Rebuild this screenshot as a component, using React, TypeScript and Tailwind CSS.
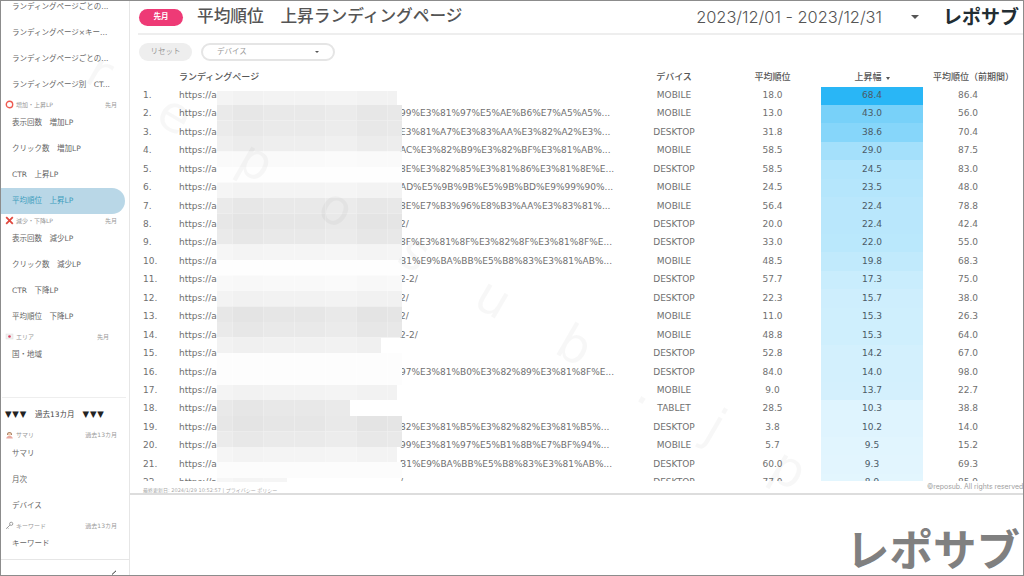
const rows = [
  ['MOBILE', '18.0', 68.4, '86.4', ''],
  ['MOBILE', '13.0', 43.0, '56.0', '99%E3%81%97%E5%AE%B6%E7%A5%A5%...'],
  ['DESKTOP', '31.8', 38.6, '70.4', 'E3%81%A7%E3%83%AA%E3%82%A2%E3%...'],
  ['MOBILE', '58.5', 29.0, '87.5', 'AC%E3%82%B9%E3%82%BF%E3%81%AB%...'],
  ['DESKTOP', '58.5', 24.5, '83.0', '8E%E3%82%85%E3%81%86%E3%81%8E%E...'],
  ['MOBILE', '24.5', 23.5, '48.0', 'AD%E5%9B%9B%E5%9B%BD%E9%99%90%...'],
  ['MOBILE', '56.4', 22.4, '78.8', '8E%E7%B3%96%E8%B3%AA%E3%83%81%...'],
  ['DESKTOP', '20.0', 22.4, '42.4', '2/'],
  ['DESKTOP', '33.0', 22.0, '55.0', '8F%E3%81%8F%E3%82%8F%E3%81%8F%E...'],
  ['MOBILE', '48.5', 19.8, '68.3', 'B1%E9%BA%BB%E5%B8%83%E3%81%AB%...'],
  ['DESKTOP', '57.7', 17.3, '75.0', '2-2/'],
  ['DESKTOP', '22.3', 15.7, '38.0', '2/'],
  ['MOBILE', '11.0', 15.3, '26.3', '2/'],
  ['MOBILE', '48.8', 15.3, '64.0', '2-2/'],
  ['DESKTOP', '52.8', 14.2, '67.0', ''],
  ['DESKTOP', '84.0', 14.0, '98.0', '97%E3%81%B0%E3%82%89%E3%81%8F%E...'],
  ['MOBILE', '9.0', 13.7, '22.7', ''],
  ['TABLET', '28.5', 10.3, '38.8', ''],
  ['DESKTOP', '3.8', 10.2, '14.0', '82%E3%81%B5%E3%82%82%E3%81%B5%...'],
  ['MOBILE', '5.7', 9.5, '15.2', '99%E3%81%97%E5%B1%8B%E7%BF%94%...'],
  ['DESKTOP', '60.0', 9.3, '69.3', 'B1%E9%BA%BB%E5%B8%83%E3%81%AB%...'],
  ['DESKTOP', '77.0', 8.9, '85.9', '/'],
] as [string, string, number, string, string][];

// mosaic bands: top y, height, gray level, right edge
const bands = [
  [91, 14, 243, 397], [105, 15.5, 233, 402], [120.5, 15.5, 234, 402], [136, 15.5, 238, 402],
  [151.5, 15.5, 250, 402], [167, 15.5, 254, 402], [182.5, 15.5, 244, 402], [198, 15.5, 233, 402],
  [213.5, 15.5, 230, 402], [229, 15.5, 233, 402], [244.5, 15.5, 245, 402], [260, 15.5, 254, 402],
  [275.5, 15.5, 249, 402], [291, 15.5, 242, 402], [306.5, 15.5, 230, 402], [322, 15.5, 233, 402],
  [337.5, 15.5, 241, 381], [353, 16, 253, 402], [369, 16, 253, 402], [385, 15, 243, 397],
  [400, 16, 232, 350], [416, 15.5, 230, 402], [431.5, 15.5, 234, 402], [447, 15, 244, 397],
  [462, 16, 252, 402], [478, 4, 245, 287],
];
const colShift = [1, -2, -2, 0, 0, 0, 0, 2, 2, -2, -2, -1];

const mosaic = bands.flatMap(([y, h, gray, end]) =>
  colShift.map((shift, i) => {
    const x = 217 + i * 15.5;
    const level = Math.min(255, Math.round(gray + (shift * (255 - gray)) / 20));
    return { x, y, h, w: Math.max(0, Math.min(15.5, end - x)), level };
  })
);

const CircleIcon = () => (
  <svg width="9" height="9" viewBox="0 0 9 9" className="shrink-0">
    <circle cx="4.5" cy="4.5" r="3.2" fill="none" stroke="#ee5a50" strokeWidth="1.4" />
  </svg>
);
const CrossIcon = () => (
  <svg width="9" height="9" viewBox="0 0 9 9" className="shrink-0">
    <path d="M1.2 1.2 7.8 7.8M7.8 1.2 1.2 7.8" stroke="#e0483e" strokeWidth="1.8" />
  </svg>
);
const FlagIcon = () => (
  <svg width="9" height="9" viewBox="0 0 9 9" className="shrink-0">
    <rect x="1" y="2" width="7" height="5" fill="#f1f1f1" stroke="#ddd" strokeWidth=".5" />
    <circle cx="4.5" cy="4.5" r="1.3" fill="#d8415f" />
  </svg>
);
const PersonIcon = () => (
  <svg width="9" height="9" viewBox="0 0 9 9" className="shrink-0">
    <path d="M2 4.4a2.5 2.5 0 1 1 5 0v.6H2z" fill="#a98263" />
    <circle cx="4.5" cy="4.3" r="1.5" fill="#f3cdb2" />
    <path d="M1.2 8.6c.3-2 1.7-2.6 3.3-2.6s3 .6 3.3 2.6z" fill="#e9a9a0" />
  </svg>
);
const KeyIcon = () => (
  <svg width="9" height="9" viewBox="0 0 9 9" className="shrink-0">
    <circle cx="6.2" cy="2.8" r="1.6" fill="none" stroke="#888" strokeWidth=".8" />
    <path d="M5 4 1.2 7.8M2.4 6.6l1 1" fill="none" stroke="#888" strokeWidth=".8" />
  </svg>
);

const SideItem = ({ label, active }: { label: string; active?: boolean }) => (
  <div
    className={
      active
        ? 'flex h-[26px] w-[124px] shrink-0 items-center rounded-r-[13px] bg-[#b9d7e7] pl-[11px] text-[#3f9dbd]'
        : 'flex h-[26px] shrink-0 items-center pl-[11px]'
    }
  >
    <span className="whitespace-pre">{label}</span>
  </div>
);

const SideSection = ({ icon, label, period, narrow }: { icon: React.ReactNode; label: string; period: string; narrow?: boolean }) => (
  <div className={narrow ? 'flex h-3 shrink-0 items-center pl-1 pr-[20px] text-[6px] text-[#999]' : 'flex h-3 shrink-0 items-center pl-1 pr-3 text-[6px] text-[#999]'}>
    {icon}
    <span className="ml-[2px] whitespace-pre">{label}</span>
    <span className="ml-auto">{period}</span>
  </div>
);

const Caret = ({ className }: { className: string }) => (
  <span className={`inline-block h-0 w-0 border-x-transparent border-t-[#555] ${className}`} />
);

const Sidebar = () => (
  <aside className="relative flex h-full w-[129px] shrink-0 flex-col overflow-hidden border-r border-[#e6e6e6] text-[7.5px] text-[#666]">
    <div className="-mt-[7px] flex flex-col">
      <SideItem label="ランディングページごとの..." />
      <SideItem label="ランディングページ×キー..." />
      <SideItem label="ランディングページごとの..." />
      <SideItem label="ランディングページ別　CT..." />
      <SideSection icon={<CircleIcon />} label="増加・上昇LP" period="先月" />
      <SideItem label="表示回数　増加LP" />
      <SideItem label="クリック数　増加LP" />
      <SideItem label="CTR　上昇LP" />
      <SideItem label="平均順位　上昇LP" active />
      <SideSection icon={<CrossIcon />} label="減少・下降LP" period="先月" />
      <SideItem label="表示回数　減少LP" />
      <SideItem label="クリック数　減少LP" />
      <SideItem label="CTR　下降LP" />
      <SideItem label="平均順位　下降LP" />
      <SideSection icon={<FlagIcon />} label="エリア" period="先月" narrow />
      <SideItem label="国・地域" />
      <div className="mx-px mt-[29px] w-[124px] border-t border-[#eeeeee]" />
      <div className="flex h-[30px] items-center pl-[4px] pt-[3px] text-[7.5px] text-[#444]">
        <span className="text-[8.5px] tracking-[0.8px] text-[#222]">▼▼▼</span>
        <span className="ml-[8px]">過去13カ月</span>
        <span className="ml-[8px] text-[8.5px] tracking-[0.8px] text-[#222]">▼▼▼</span>
      </div>
      <SideSection icon={<PersonIcon />} label="サマリ" period="過去13カ月" />
      <div className="h-px shrink-0" />
      <SideItem label="サマリ" />
      <SideItem label="月次" />
      <SideItem label="デバイス" />
      <SideSection icon={<KeyIcon />} label="キーワード" period="過去13カ月" />
      <SideItem label="キーワード" />
      <div className="mt-[2px] border-t border-[#e6e6e6]" />
    </div>
    <svg className="absolute bottom-0 left-[110px]" width="8" height="5" viewBox="0 0 8 5">
      <path d="M1 4.5 5 .8" stroke="#333" strokeWidth="1" fill="none" />
    </svg>
  </aside>
);

const Header = () => (
  <header className="ml-2 flex h-[34px] shrink-0 items-center border-b-2 border-[#eeeeee]">
    <span className="ml-px flex h-[17px] w-[44px] items-center justify-center rounded-full bg-[#ee3a76] text-[7.5px] font-bold text-white">先月</span>
    <h1 className="ml-[14px] whitespace-pre text-[16.7px] font-medium text-[#555]">平均順位　上昇ランディングページ</h1>
    <span className="ml-auto font-['Inter',sans-serif] text-[16.4px] font-light text-[#555]">2023/12/01 - 2023/12/31</span>
    <Caret className="ml-[29px] border-x-[4px] border-t-[4px]" />
    <span className="ml-[24px] mr-[4px] text-[19px] font-bold leading-none text-[#222d33]">レポサブ</span>
  </header>
);

const Filters = () => (
  <div className="ml-[9px] mt-2 flex h-[18px] shrink-0 items-stretch gap-[9px] text-[7.5px] text-[#999]">
    <button className="w-[53px] rounded-full bg-[#eeeeee]">リセット</button>
    <div className="flex w-[134px] items-center rounded-full border-2 border-[#e5e5e5] pl-[14px] pr-[14px]">
      <span>デバイス</span>
      <Caret className="ml-auto border-x-[2px] border-t-[2px]" />
    </div>
  </div>
);

const gridCols = 'grid grid-cols-[36px_445px_100px_97px_102px_90px] pl-[13px]';

const Table = () => (
  <div className="mt-[8.5px] h-[411.5px] shrink-0 overflow-hidden text-[9px] text-[#707070]">
    <div className={`${gridCols} h-[17px] items-center font-medium text-[#555]`}>
      <span />
      <span>ランディングページ</span>
      <span className="text-center">デバイス</span>
      <span className="text-center">平均順位</span>
      <span className="flex items-center justify-center gap-1">
        上昇幅
        <Caret className="border-x-[2.5px] border-t-[3px]" />
      </span>
      <span className="ml-[10px] whitespace-nowrap">平均順位（前期間）</span>
    </div>
    {rows.map(([device, avg, lift, prev, tail], i) => {
      const t = lift / 68.4;
      const bg = `rgb(${Math.round(255 - 214 * t)},${Math.round(255 - 73 * t)},${Math.round(255 - 9 * t)})`;
      return (
        <div key={i} className={`${gridCols} h-[18.45px] items-center`}>
          <span>{i + 1}.</span>
          <span className="flex whitespace-nowrap">
            <span className="w-[221px]">https://a</span>
            <span>{tail}</span>
          </span>
          <span className="text-center">{device}</span>
          <span className="text-center">{avg}</span>
          <span className="flex h-full items-center justify-center text-[#4b5a66]" style={{ backgroundColor: bg }}>
            {lift.toFixed(1)}
          </span>
          <span className="text-center">{prev}</span>
        </div>
      );
    })}
  </div>
);

export default function App() {
  return (
    <div className="relative flex h-[576px] w-[1024px] overflow-hidden border border-[#8c8c8c] bg-white font-['DejaVu_Sans','Noto_Sans_CJK_JP',sans-serif]">
      <Sidebar />
      <main className="flex min-w-0 flex-1 flex-col">
        <Header />
        <Filters />
        <Table />
        <div className="flex h-[12px] shrink-0 justify-between whitespace-nowrap pl-[13px] text-[5px] text-[#aaa]">
          <span className="pt-[6px]">
            最終更新日: 2024/1/29 10:52:57 | <span className="underline">プライバシー ポリシー</span>
          </span>
          <span className="w-[96px] overflow-hidden pt-[1px] font-['Inter',sans-serif] text-[6.9px] text-[#a0a0a0]">©reposub. All rights reserved</span>
        </div>
        <div className="flex flex-1 items-end justify-end border-t-2 border-[#dddddd] pb-[2px] pr-[3px]">
          <span className="text-[43.5px] font-bold leading-none text-[#808080]">レポサブ</span>
        </div>
      </main>

      {/* pixelated redaction over the url column */}
      <svg className="pointer-events-none absolute -left-px -top-px" width="1024" height="576" viewBox="0 0 1024 576">
        {mosaic.map((c, i) => (
          <rect key={i} x={c.x} y={c.y} width={c.w} height={c.h} fill={`rgb(${c.level},${c.level},${c.level})`} />
        ))}
      </svg>

      {/* watermark */}
      <span className="pointer-events-none absolute left-[90px] top-[28px] origin-left rotate-[30deg] whitespace-nowrap text-[50px] tracking-[62px] text-black/[0.03]">
        reposub.jp
      </span>
    </div>
  );
}
